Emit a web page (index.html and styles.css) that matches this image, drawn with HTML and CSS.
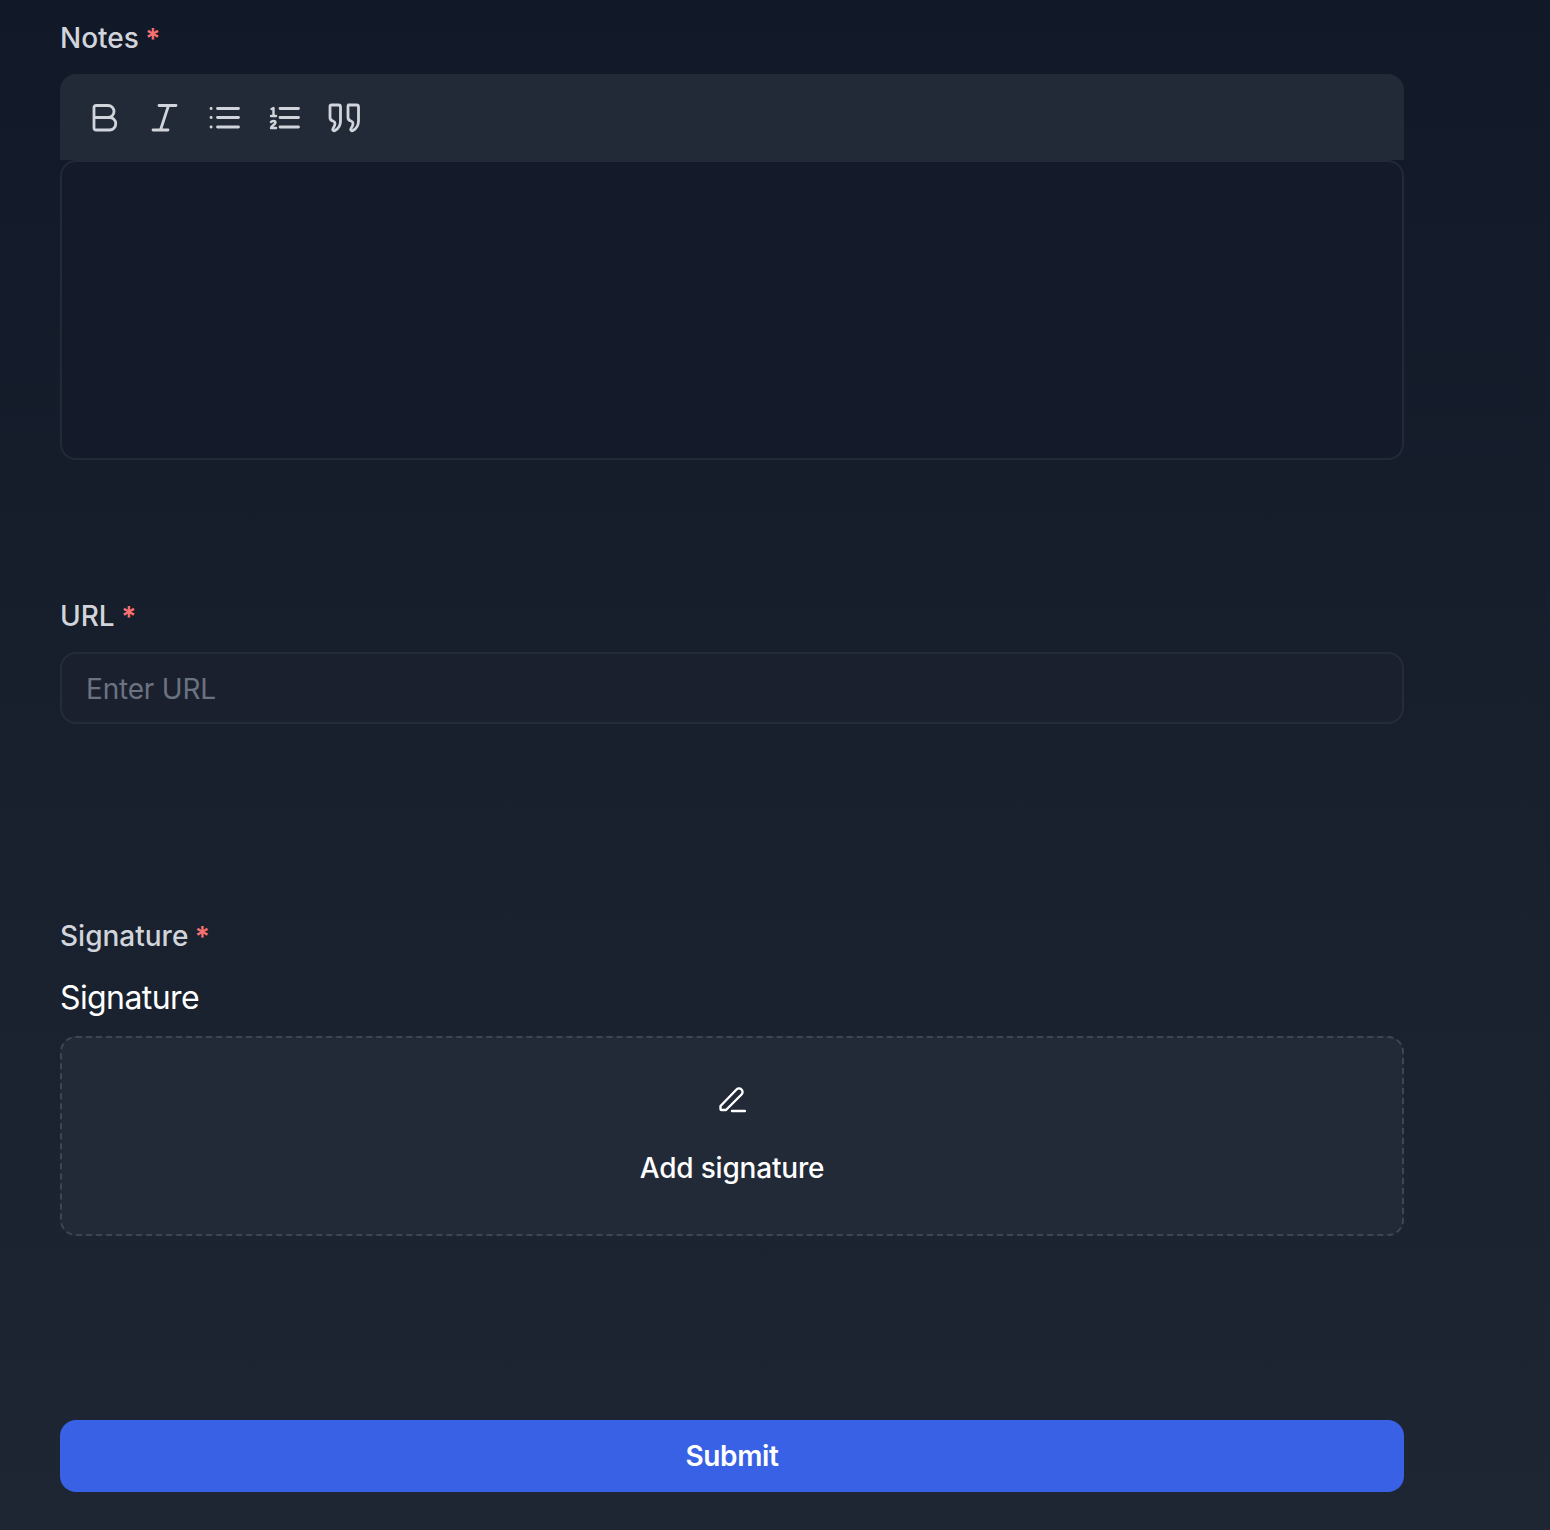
FILE: index.html
```html
<!DOCTYPE html>
<html lang="en">
<head>
<meta charset="utf-8">
<title>Form</title>
<link rel="stylesheet" href="styles.css">
</head>
<body>
<form class="form">
  <div class="field field-notes">
    <div class="label">Notes <span class="req">*</span></div>
    <div class="toolbar">
      <svg class="tool" viewBox="0 0 32 32"><path d="M8 3.500h12a6 6 0 0 1 0 12H6V5.500a2 2 0 0 1 2-2zM6 15.500h15.500a6.250 6.250 0 0 1 0 12.500H8a2 2 0 0 1-2-2z"/></svg>
      <svg class="tool" viewBox="0 0 32 32"><path d="M11 3.500h17M5 28h15M20.500 3.500 12.500 28"/></svg>
      <svg class="tool" viewBox="0 0 32 32"><path d="M9.500 6.500h21M9.500 15.500h21M9.500 25h21M3 6.500h.2M3 15.500h.2M3 25h.2"/></svg>
      <svg class="tool" viewBox="0 0 32 32"><path d="M12 6.500h18.500M12 15.500h18.500M12 25h18.500"/><path class="thin" d="M3.500 7 5.500 6v8M3 14h5M3 20c1-1.500 4.500-1.500 4.500.5S3 23.500 3 26h5"/></svg>
      <svg class="tool" viewBox="0 0 32 32"><path d="M3.500 3h7a2 2 0 0 1 2 2v14c0 4-2 7.500-5.500 9.500-1.500.8-3-.7-2-2 1-1.300 2-3 2-5 0-1-.7-2-2-2.500C3 18.500 2 17.500 2 15.500V4.500A1.500 1.500 0 0 1 3.500 3zM20.500 3h8a2 2 0 0 1 2 2v14c0 4-2 7.500-5.500 9.500-1.500.8-3-.7-2-2 1-1.300 2-3 2-5 0-1-.7-2-2-2.500-2-.5-3-1.500-3-3.500V4.500A1.500 1.500 0 0 1 21.500 3z"/></svg>
    </div>
    <div class="editor"></div>
  </div>
  <div class="field field-url">
    <div class="label">URL <span class="req">*</span></div>
    <input class="input" type="text" placeholder="Enter URL">
  </div>
  <div class="field field-signature">
    <div class="label">Signature <span class="req">*</span></div>
    <div class="sig-title">Signature</div>
    <div class="sig-box">
      <svg class="pen" viewBox="0 0 28 28"><path d="M3 20.500 18.500 4.500a3.500 3.500 0 0 1 5 5L8 25H3.500a1 1 0 0 1-1-1v-3zM14 26h13"/></svg>
      <div class="sig-text">Add signature</div>
    </div>
  </div>
  <button class="submit" type="button">Submit</button>
</form>
</body>
</html>
```
FILE: styles.css
```css
* { box-sizing: border-box; }
html, body { margin: 0; height: 1530px; }
body {
  background: linear-gradient(180deg, #111827 0%, #1f2633 100%);
  font-family: Inter, "Liberation Sans", sans-serif;
  color: #fff;
  overflow: hidden;
}
.form { width: 1344px; margin-left: 60px; padding-top: 18px; }
.label {
  font-size: 28px;
  line-height: 41px;
  font-weight: 500;
  color: #d1d5db;
  height: 40px;
}
.req { color: #f87171; margin-left: -1px; font-weight: 600; position: relative; top: 1px; }
.toolbar {
  margin-top: 16px;
  height: 86px;
  background: #222a37;
  border-radius: 16px 16px 0 0;
  padding: 2px 28px 0;
  display: flex;
  align-items: center;
  gap: 28px;
}
.tool { width: 32px; height: 32px; fill: none; stroke: #d1d5db; stroke-width: 2.800; stroke-linecap: round; stroke-linejoin: round; }
.tool .thin { stroke-width: 2.400; }
.editor {
  height: 300px;
  background: #141a29;
  border: 2px solid #222a37;
  border-radius: 16px;
}
.field-url { margin-top: 136px; }
.input {
  display: block;
  width: 100%;
  height: 72px;
  margin-top: 16px;
  padding: 2px 24px 0;
  background: #1a202e;
  border: 2px solid #252b39;
  border-radius: 16px;
  font: 400 28px Inter, "Liberation Sans", sans-serif;
  letter-spacing: -0.2px;
  color: #fff;
  outline: none;
}
.input::placeholder { color: #6b7280; opacity: 1; }
.field-signature { margin-top: 192px; }
.sig-title { margin-top: 16px; height: 48px; font-size: 32px; line-height: 52px; font-weight: 400; letter-spacing: -0.6px; color: #fff; }
.sig-box {
  margin-top: 16px;
  height: 200px;
  background: #222a37;
  border: 2px dashed #3f4653;
  border-radius: 16px;
  display: flex;
  flex-direction: column;
  align-items: center;
  padding-top: 47px;
}
.pen { width: 28px; height: 28px; fill: none; stroke: #fff; stroke-width: 2.400; stroke-linecap: round; stroke-linejoin: round; }
.sig-text { margin-top: 35px; font-size: 28px; line-height: 40px; font-weight: 500; letter-spacing: -0.2px; color: #fff; }
.submit {
  display: block;
  width: 100%;
  height: 72px;
  margin-top: 184px;
  background: #3861e5;
  border: 0;
  border-radius: 16px;
  color: #fff;
  font: 600 28px Inter, "Liberation Sans", sans-serif;
  letter-spacing: -0.4px;
}
```
